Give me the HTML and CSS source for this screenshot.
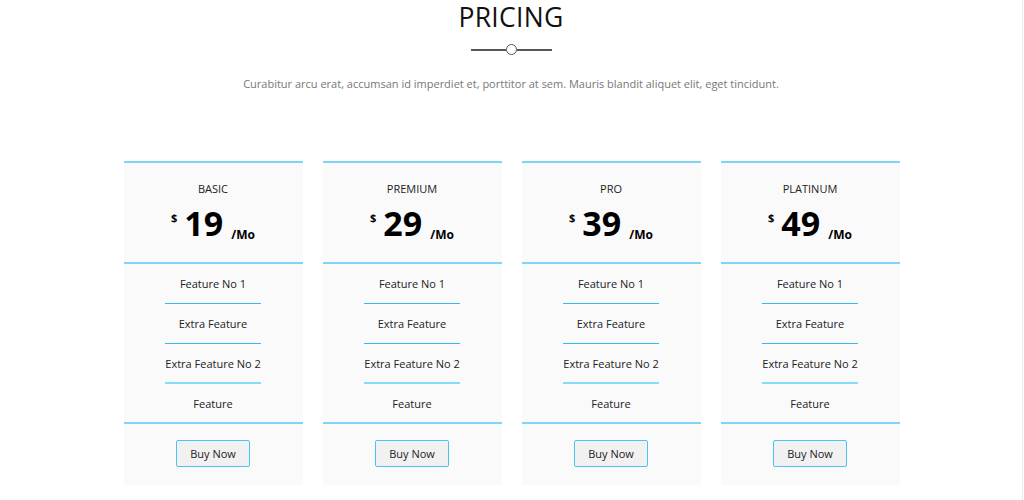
FILE: index.html
```html
<!DOCTYPE html>
<html>
<head>
<meta charset="utf-8">
<link rel="stylesheet" href="styles.css">
</head>
<body>
<div class="page">
  <header class="intro">
    <h1 class="title">PRICING</h1>
    <div class="divider"><span class="bar"></span><span class="dot"></span><span class="bar"></span></div>
    <p class="lead">Curabitur arcu erat, accumsan id imperdiet et, porttitor at sem. Mauris blandit aliquet elit, eget tincidunt.</p>
  </header>
  <section class="plans">
    <div class="plan">
      <div class="plan-head">
        <div class="plan-name">BASIC</div>
        <div class="price"><span class="cur">$</span><span class="amt">19</span><span class="per">/Mo</span></div>
      </div>
      <ul class="features">
        <li>Feature No 1</li><li>Extra Feature</li><li>Extra Feature No 2</li><li>Feature</li>
      </ul>
      <div class="plan-foot"><button class="buy">Buy Now</button></div>
    </div>
    <div class="plan">
      <div class="plan-head">
        <div class="plan-name">PREMIUM</div>
        <div class="price"><span class="cur">$</span><span class="amt">29</span><span class="per">/Mo</span></div>
      </div>
      <ul class="features">
        <li>Feature No 1</li><li>Extra Feature</li><li>Extra Feature No 2</li><li>Feature</li>
      </ul>
      <div class="plan-foot"><button class="buy">Buy Now</button></div>
    </div>
    <div class="plan">
      <div class="plan-head">
        <div class="plan-name">PRO</div>
        <div class="price"><span class="cur">$</span><span class="amt">39</span><span class="per">/Mo</span></div>
      </div>
      <ul class="features">
        <li>Feature No 1</li><li>Extra Feature</li><li>Extra Feature No 2</li><li>Feature</li>
      </ul>
      <div class="plan-foot"><button class="buy">Buy Now</button></div>
    </div>
    <div class="plan">
      <div class="plan-head">
        <div class="plan-name">PLATINUM</div>
        <div class="price"><span class="cur">$</span><span class="amt">49</span><span class="per">/Mo</span></div>
      </div>
      <ul class="features">
        <li>Feature No 1</li><li>Extra Feature</li><li>Extra Feature No 2</li><li>Feature</li>
      </ul>
      <div class="plan-foot"><button class="buy">Buy Now</button></div>
    </div>
  </section>
</div>
</body>
</html>
```
FILE: styles.css
```css
html, body {
  margin: 0;
  padding: 0;
  background: #fff;
}
body {
  font-family: "Open Sans", "Liberation Sans", sans-serif;
  color: #333;
}
.page {
  width: 1022px;
  min-height: 500px;
  border-right: 1px solid #ececec;
  overflow: hidden;
}
.intro {
  text-align: center;
  padding-top: 1px;
}
.title {
  margin: 0;
  font-size: 26.5px;
  font-weight: 400;
  line-height: 33px;
  color: #111;
  letter-spacing: 0.3px;
}
.divider {
  display: flex;
  align-items: center;
  justify-content: center;
  margin-top: 10px;
  height: 11px;
}
.bar {
  width: 35px;
  height: 2px;
  background: #555;
}
.dot {
  width: 11px;
  height: 11px;
  border: 1.5px solid #555;
  border-radius: 50%;
  background: #fff;
  box-sizing: border-box;
}
.lead {
  margin: 20px 0 0;
  font-size: 11px;
  line-height: 17px;
  color: #777;
}
.plans {
  display: flex;
  justify-content: center;
  gap: 20px;
  margin-top: 69px;
  padding-left: 1px;
}
.plan {
  width: 179px;
  background: #fafafa;
}
.plan-head {
  border-top: 2px solid #7fd6f4;
  border-bottom: 2px solid #7fd6f4;
  height: 99px;
  text-align: center;
}
.plan-name {
  font-size: 11px;
  line-height: 16px;
  padding-top: 18px;
  color: #222;
}
.price {
  margin-top: 0;
  text-align: center;
  white-space: nowrap;
  color: #000;
  font-weight: 700;
  line-height: 42px;
}
.cur {
  font-size: 11px;
  vertical-align: 14px;
  margin-right: 7px;
}
.amt {
  font-size: 34px;
  margin-right: 8px;
}
.per {
  font-size: 12px;
  vertical-align: -3px;
}
.features {
  list-style: none;
  margin: 0;
  padding: 0;
  border-bottom: 2px solid #7fd6f4;
}
.features li {
  width: 96px;
  margin: 0 auto;
  height: 39px;
  line-height: 39px;
  white-space: nowrap;
  display: flex;
  justify-content: center;
  font-size: 11px;
  color: #222;
  border-bottom: 1px solid #33bbee;
}
.features li:nth-child(3) {
  border-bottom: 2px solid #86dcf8;
  height: 38px;
}
.features li:last-child {
  border-bottom: none;
  height: 38px;
}
.plan-foot {
  height: 61px;
  padding-top: 16px;
  box-sizing: border-box;
  text-align: center;
}
.buy {
  width: 74px;
  height: 27px;
  font-family: "Open Sans", "Liberation Sans", sans-serif;
  font-size: 11px;
  color: #222;
  background: #f1f1f1;
  border: 1px solid #4cc4ef;
  border-radius: 2px;
  padding: 0;
}
```
